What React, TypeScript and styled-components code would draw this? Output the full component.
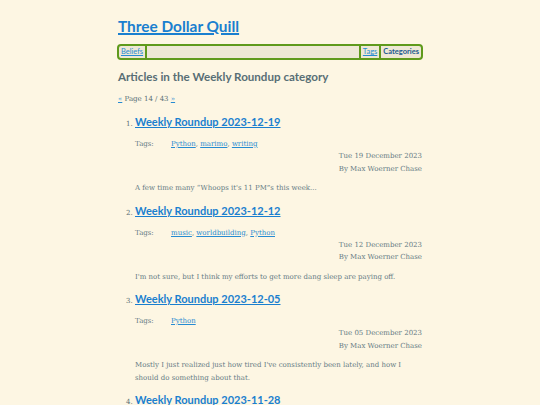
import styled, { createGlobalStyle } from "styled-components";

const GlobalStyle = createGlobalStyle`
  html, body {
    margin: 0;
    padding: 0;
    background: #fdf6e3;
  }
  body {
    font-family: "DejaVu Serif", serif;
    color: #657b83;
  }
`;

type Article = {
  title: string;
  tags: string[];
  date: string;
  summary: string;
};

const articles: Article[] = [
  {
    title: "Weekly Roundup 2023-12-19",
    tags: ["Python", "marimo", "writing"],
    date: "Tue 19 December 2023",
    summary: "A few time many \u201cWhoops it's 11 PM\u201ds this week...",
  },
  {
    title: "Weekly Roundup 2023-12-12",
    tags: ["music", "worldbuilding", "Python"],
    date: "Tue 12 December 2023",
    summary: "I'm not sure, but I think my efforts to get more dang sleep are paying off.",
  },
  {
    title: "Weekly Roundup 2023-12-05",
    tags: ["Python"],
    date: "Tue 05 December 2023",
    summary:
      "Mostly I just realized just how tired I've consistently been lately, and how I should do something about that.",
  },
  {
    title: "Weekly Roundup 2023-11-28",
    tags: ["Python"],
    date: "Tue 28 November 2023",
    summary: "More of the same.",
  },
];

export default function App() {
  return (
    <>
      <GlobalStyle />
      <Page>
        <SiteTitle>
          <a href="#">Three Dollar Quill</a>
        </SiteTitle>
        <Nav>
          <NavItem $side="right">
            <NavLink href="#">Beliefs</NavLink>
          </NavItem>
          <Spacer />
          <NavItem $side="left">
            <NavLink href="#">Tags</NavLink>
          </NavItem>
          <NavItem $side="left">
            <NavLink href="#" $active>
              Categories
            </NavLink>
          </NavItem>
        </Nav>
        <Heading>Articles in the Weekly Roundup category</Heading>
        <Pager>
          <a href="#">«</a> Page 14 / 43 <a href="#">»</a>
        </Pager>
        <List>
          {articles.map((a) => (
            <Entry key={a.title}>
              <EntryTitle>
                <a href="#">{a.title}</a>
              </EntryTitle>
              <TagRow>
                <TagLabel>Tags:</TagLabel>
                <span>
                  {a.tags.map((t, i) => (
                    <span key={t}>
                      <TagLink href="#">{t}</TagLink>
                      {i < a.tags.length - 1 ? ", " : ""}
                    </span>
                  ))}
                </span>
              </TagRow>
              <Meta>
                <div>{a.date}</div>
                <div>By Max Woerner Chase</div>
              </Meta>
              <Summary>{a.summary}</Summary>
            </Entry>
          ))}
        </List>
      </Page>
    </>
  );
}

const Page = styled.div`
  width: 304px;
  margin: 0 auto;
  padding-top: 15px;
`;

const SiteTitle = styled.h1`
  margin: 0 0 7px;
  font-family: Lato, sans-serif;
  font-size: 15.4px;
  line-height: 22px;
  font-weight: 700;
  a {
    color: #1a7fcf;
    text-decoration: underline;
    text-decoration-thickness: 1.5px;
  }
`;

const Nav = styled.nav`
  display: flex;
  align-items: stretch;
  margin: 1px -1px 0;
  height: 12px;
  border: 2px solid #5f9a1c;
  border-radius: 4px;
  background: #eee8d5;
  font-family: Lato, sans-serif;
  font-size: 7.5px;
  line-height: 12px;
`;

const NavItem = styled.div<{ $side: "left" | "right" }>`
  padding: 0 2px;
  ${({ $side }) =>
    $side === "left"
      ? "border-left: 2px solid #5f9a1c;"
      : "border-right: 2px solid #5f9a1c;"}
`;

const Spacer = styled.div`
  flex: 1;
`;

const NavLink = styled.a<{ $active?: boolean }>`
  color: ${({ $active }) => ($active ? "#1b5a8f" : "#268bd2")};
  font-weight: ${({ $active }) => ($active ? 700 : 400)};
  text-decoration: ${({ $active }) => ($active ? "none" : "underline")};
`;

const Heading = styled.h2`
  margin: 8px 0 0;
  font-family: Lato, sans-serif;
  font-size: 11.6px;
  line-height: 18px;
  font-weight: 700;
  color: #586e75;
`;

const Pager = styled.p`
  margin: 7px 0 0;
  font-size: 7px;
  line-height: 12px;
  color: #586e75;
  a {
    color: #268bd2;
  }
`;

const List = styled.ol`
  margin: 8px 0 0;
  padding-left: 17px;
  font-size: 7px;
  color: #586e75;
`;

const Entry = styled.li`
  margin-bottom: 7px;
  &::marker {
    font-size: 7px;
  }
`;

const EntryTitle = styled.h3`
  display: inline;
  font-family: Lato, sans-serif;
  font-size: 11px;
  line-height: 18px;
  font-weight: 700;
  a {
    color: #1a7fcf;
    text-decoration: underline;
  }
`;

const TagRow = styled.div`
  display: flex;
  margin-top: 7px;
  font-size: 7px;
  line-height: 12px;
  color: #657b83;
`;

const TagLabel = styled.span`
  width: 36px;
`;

const TagLink = styled.a`
  color: #268bd2;
  text-decoration: underline;
`;

const Meta = styled.div`
  margin-top: 0;
  text-align: right;
  font-size: 7px;
  line-height: 12.5px;
  color: #657b83;
`;

const Summary = styled.p`
  margin: 7px 0 0;
  font-size: 7px;
  line-height: 12.5px;
  color: #657b83;
`;
